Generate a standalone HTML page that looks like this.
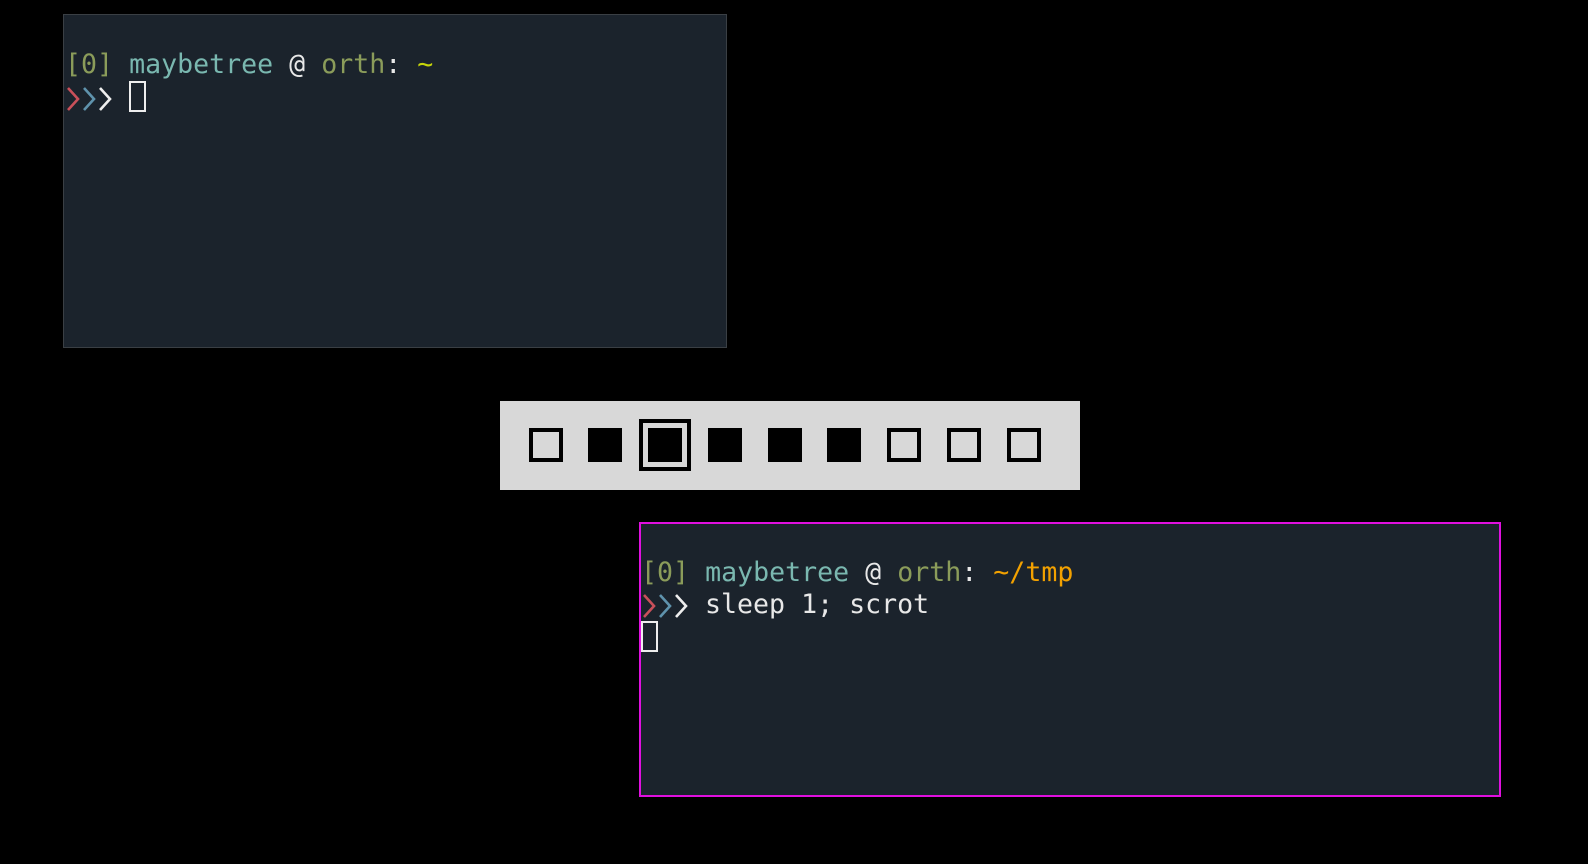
<!DOCTYPE html>
<html><head><style>
html,body{margin:0;padding:0;background:#000;width:1588px;height:864px;overflow:hidden;position:relative}
.win{position:absolute;background:#1b232c;box-sizing:border-box;font-family:"DejaVu Sans Mono","Liberation Mono",monospace;font-size:26.6px;line-height:32px;color:#e8e8e8;white-space:pre}
.t1{left:63px;top:14px;width:664px;height:334px;border:1px solid #3a3f44;padding:34px 0 0 1px}
.t2{left:639px;top:522px;width:862px;height:275px;border:2px solid #e010e0;padding:33px 0 0 0}
.ol{color:#8b9c5a}.te{color:#7ab8b0}.yg{color:#c6d40a}.or{color:#f2a100}
.cur{display:inline-block;width:13px;height:27px;border:2px solid #eee;vertical-align:-6px}
.chev{display:inline-block;width:48px;height:32px;vertical-align:-8px}
.bar{position:absolute;left:500px;top:401px;width:580px;height:89px;background:#d8d8d8}
.sq{position:absolute;top:27px;width:34px;height:34px;box-sizing:border-box;border:4px solid #000}
.f{background:#000}
</style></head><body>
<div class="win t1"><span class="ol">[0]</span> <span class="te">maybetree</span> @ <span class="ol">orth</span>: <span class="yg">~</span>
<svg class="chev" viewBox="0 0 48 32"><g fill="none" stroke-width="2.6"><polyline points="3,6 13,17 3,28" stroke="#c9505a"/><polyline points="19,6 29,17 19,28" stroke="#5f93ad"/><polyline points="35,6 45,17 35,28" stroke="#eee"/></g></svg> <span class="cur"></span></div>
<div class="bar">
<div class="sq" style="left:29px"></div>
<div class="sq f" style="left:88px"></div>
<div class="sq" style="left:139px;top:18px;width:52px;height:52px;border:4px solid #000;background:transparent"></div>
<div class="sq f" style="left:148px"></div>
<div class="sq f" style="left:208px"></div>
<div class="sq f" style="left:268px"></div>
<div class="sq f" style="left:327px"></div>
<div class="sq" style="left:387px"></div>
<div class="sq" style="left:447px"></div>
<div class="sq" style="left:507px"></div>
</div>
<div class="win t2"><span class="ol">[0]</span> <span class="te">maybetree</span> @ <span class="ol">orth</span>: <span class="or">~/tmp</span>
<svg class="chev" viewBox="0 0 48 32"><g fill="none" stroke-width="2.6"><polyline points="3,6 13,17 3,28" stroke="#c9505a"/><polyline points="19,6 29,17 19,28" stroke="#5f93ad"/><polyline points="35,6 45,17 35,28" stroke="#eee"/></g></svg> sleep 1; scrot
<span class="cur"></span></div>
</body></html>
